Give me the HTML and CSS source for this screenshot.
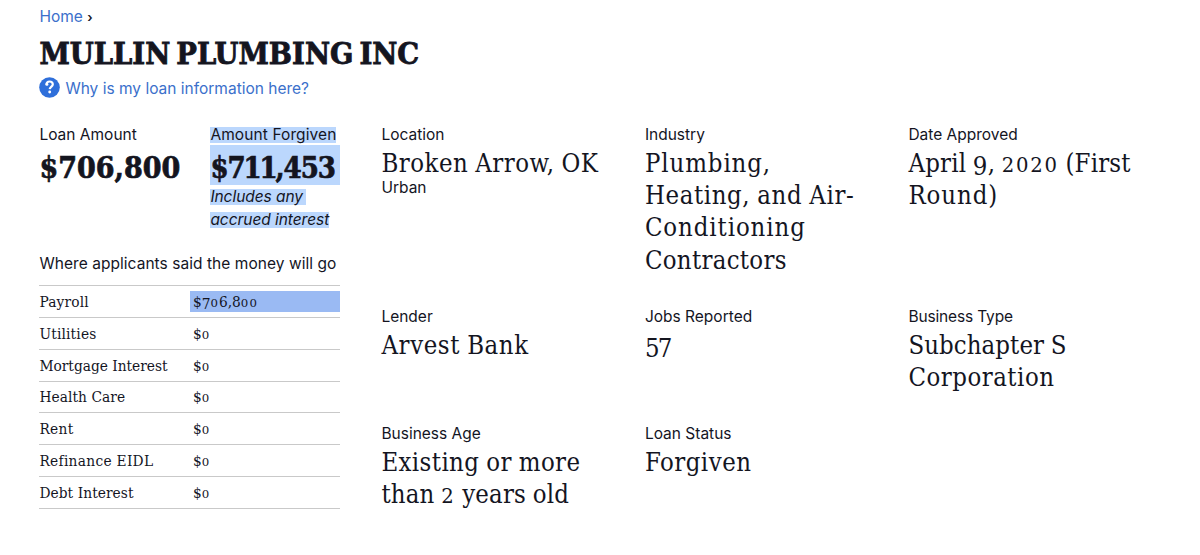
FILE: index.html
```
<!DOCTYPE html>
<html lang="en">
<head>
<meta charset="utf-8">
<title>Mullin Plumbing Inc</title>
<link rel="stylesheet" href="styles.css">
</head>
<body>
<nav class="crumbs"><a class="link" href="#">Home</a> <span class="chev">›</span></nav>
<h1 class="title">MULLIN PLUMBING INC</h1>
<a class="why link" href="#">
  <svg class="why-icon" viewBox="0 0 21 21" width="21" height="21"><circle cx="10.5" cy="10.5" r="10.3" fill="#2f6fda"/><path d="M7.5 8.1C7.1 5.7 8.6 4.5 10.6 4.5c2 0 3.2 1.1 3.2 2.7 0 2.3-2.8 2.4-3.1 5" fill="none" stroke="#fff" stroke-width="2.2"/><circle cx="8" cy="7.4" r="1.4" fill="#fff"/><circle cx="10.7" cy="15" r="1.45" fill="#fff"/></svg>
  <span>Why is my loan information here?</span>
</a>
<main class="content">
  <section class="money">
    <div class="amounts">
      <div>
        <div class="label">Loan Amount</div>
        <div class="big">$706,800</div>
      </div>
      <div>
        <div class="label"><span class="mark">Amount Forgiven</span></div>
        <div class="big marked">$<i class="narrow">711</i>,453</div>
        <div class="label note"><span class="mark mark-tail">Includes any</span><br><span class="mark">accrued interest</span></div>
      </div>
    </div>
    <div class="label uses-title">Where applicants said the money will go</div>
    <div class="uses">
      <div class="row"><span class="name t2">Payroll</span><span class="cell cell-on">$<i class="low">7</i><i class="sm">0</i>6,8<i class="sm">00</i></span></div>
      <div class="row"><span class="name t2">Utilities</span><span class="cell">$<i class="sm">0</i></span></div>
      <div class="row"><span class="name">Mortgage Interest</span><span class="cell">$<i class="sm">0</i></span></div>
      <div class="row"><span class="name t1">Health Care</span><span class="cell">$<i class="sm">0</i></span></div>
      <div class="row"><span class="name t3">Rent</span><span class="cell">$<i class="sm">0</i></span></div>
      <div class="row"><span class="name t3">Refinance EIDL</span><span class="cell">$<i class="sm">0</i></span></div>
      <div class="row"><span class="name t1">Debt Interest</span><span class="cell">$<i class="sm">0</i></span></div>
    </div>
  </section>
  <section class="facts">
    <div>
      <div class="label">Location</div>
      <div class="value"><span class="t5">Broken Arrow, OK</span></div>
      <div class="label sub">Urban</div>
    </div>
    <div>
      <div class="label">Industry</div>
      <div class="value"><span class="t9">Plumbing,</span><br><span class="t6">Heating, and Air-</span><br><span class="t9">Conditioning</span><br><span class="t3">Contractors</span></div>
    </div>
    <div>
      <div class="label">Date Approved</div>
      <div class="value"><span class="t2">April <i class="low">9</i>, <i class="sm">2020</i> (First</span><br><span class="t9">Round)</span></div>
    </div>
    <div>
      <div class="label">Lender</div>
      <div class="value"><span class="t6">Arvest Bank</span></div>
    </div>
    <div>
      <div class="label">Jobs Reported</div>
      <div class="value"><i class="low tight">57</i></div>
    </div>
    <div>
      <div class="label tight-label">Business Type</div>
      <div class="value"><span class="t1">Subchapter S</span><br><span class="t5">Corporation</span></div>
    </div>
    <div>
      <div class="label">Business Age</div>
      <div class="value"><span class="t4">Existing or more</span><br><span class="t2">than <i class="sm">2</i> years old</span></div>
    </div>
    <div>
      <div class="label">Loan Status</div>
      <div class="value"><span class="t5">Forgiven</span></div>
    </div>
  </section>
</main>
</body>
</html>
```
FILE: styles.css
```
body {
  margin: 0;
  padding: 5px 29px 0 39.4px;
  background: #fff;
  color: #14151f;
  font: 15.5px/23px Inter, "Liberation Sans", sans-serif;
}
i { font-style: normal; }
.link { color: #3b70cb; text-decoration: none; }
.crumbs { height: 23px; }
.chev { color: #14151f; font-size: 13px; font-weight: 600; }
.title {
  margin: 6px 0 0;
  font: bold 30.5px/38px "DejaVu Serif Condensed", "DejaVu Serif", serif;
  font-stretch: condensed;
  word-spacing: -3.5px;
  -webkit-text-stroke: 0.8px #14151f;
}
.why { display: flex; align-items: center; gap: 5px; height: 23px; margin-top: 4px; }
.why-icon { flex: none; }
.why span { padding-top: 2px; }
.content { display: flex; gap: 41px; margin-top: 24px; }
.money { width: 301px; flex: none; }
.amounts { display: grid; grid-template-columns: 171px 130px; }
.label { white-space: nowrap; }
.mark { display: inline-block; height: 16px; line-height: 16px; background: #bbd7fd; letter-spacing: 0.1px; }
.note .mark { letter-spacing: -0.05px; }
.mark-tail { padding-right: 3px; }
.note { font-style: italic; }
.big {
  box-sizing: border-box;
  height: 40px;
  margin-top: -1px;
  padding-top: 5px;
  font: bold 30px/36px "DejaVu Serif Condensed", "DejaVu Serif", serif;
  font-stretch: condensed;
  -webkit-text-stroke: 0.7px #14151f;
  white-space: nowrap;
}
.marked { padding-top: 7px; background: #bbd7fd; font-size: 29px; line-height: 33px; letter-spacing: -1px; }
.narrow { letter-spacing: -2.2px; }
.uses-title { margin-top: 21px; letter-spacing: 0.05px; }
.uses {
  display: grid;
  grid-template-rows: repeat(7, 1fr);
  height: 223px;
  margin-top: 10px;
  border-top: 1px solid #c9c9c9;
  font: 15.3px/22.5px "DejaVu Serif Condensed", "DejaVu Serif", serif;
  font-stretch: condensed;
}
.row {
  display: grid;
  grid-template-columns: 150.5px 1fr;
  align-items: center;
  border-bottom: 1px solid #c9c9c9;
}
.name { height: 21px; }
.cell { height: 21px; padding-left: 3px; white-space: nowrap; }
.cell-on { background: #9abaf3; }
/* Old-style figures: short digits at x-height, others dropped below the baseline */
.sm { font-family: "DejaVu Serif", serif; font-stretch: normal; font-size: 0.77em; line-height: 0; letter-spacing: 0.09em; }
.low { position: relative; top: 0.13em; }
.tight { letter-spacing: -1.8px; }
.facts { flex: 1; display: grid; grid-template-columns: repeat(3, 222.5px); gap: 29px 41px; align-content: start; }
.value {
  margin-top: 1px;
  font: 25.5px/32.2px "DejaVu Serif Condensed", "DejaVu Serif", serif;
  font-stretch: condensed;
  word-spacing: -0.8px;
  white-space: nowrap;
}
.sub { margin-top: -3px; }
.tight-label { letter-spacing: -0.15px; }
.t1 { letter-spacing: 0.08px; }
.t2 { letter-spacing: 0.18px; }
.t3 { letter-spacing: 0.3px; }
.t4 { letter-spacing: 0.4px; }
.t5 { letter-spacing: 0.5px; }
.t6 { letter-spacing: 0.6px; }
.t9 { letter-spacing: 0.9px; }
```
